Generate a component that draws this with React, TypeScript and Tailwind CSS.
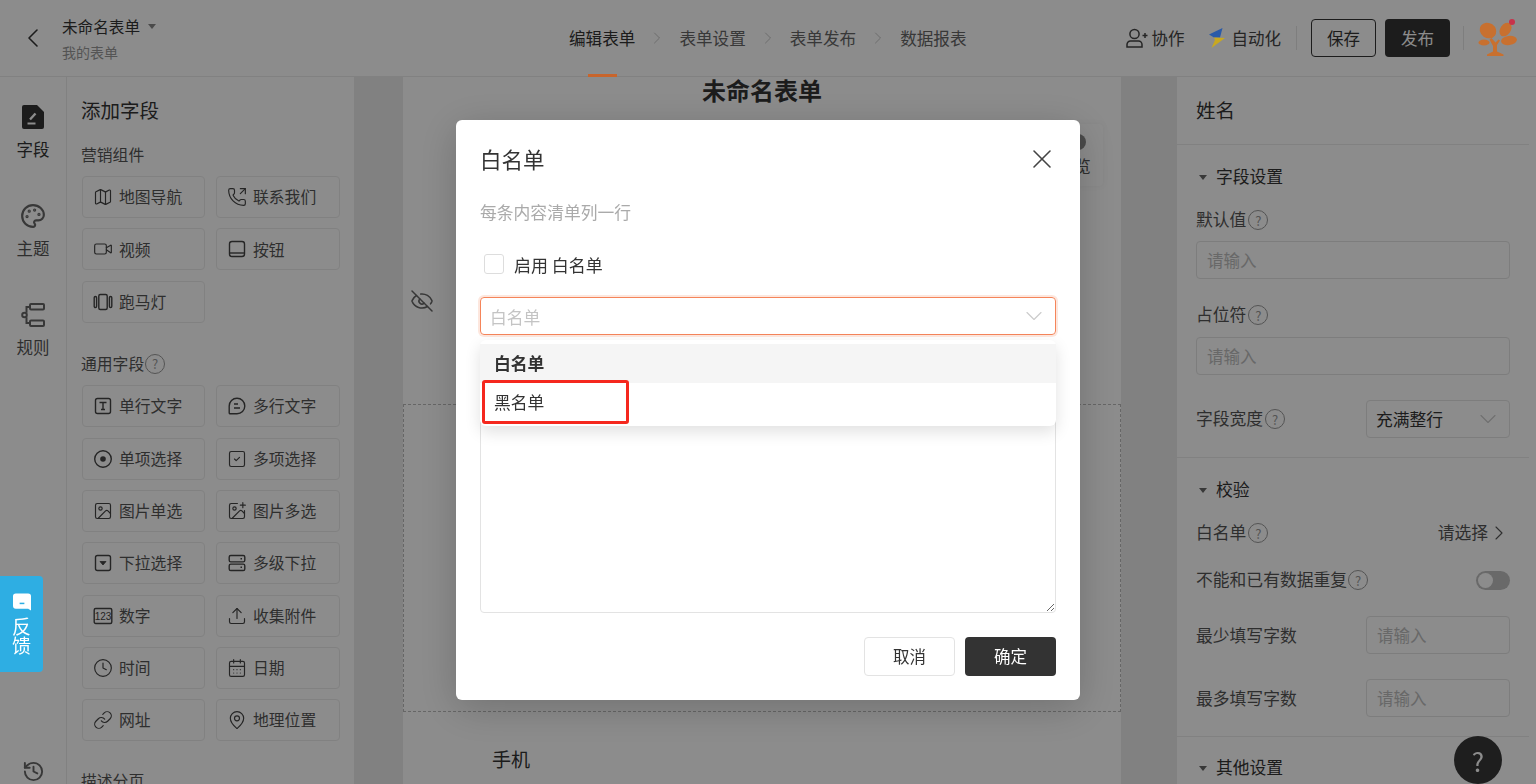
import type { ReactNode } from "react";
import {
  CalendarDays,
  ChevronDown,
  ChevronLeft,
  ChevronRight,
  Clock,
  EyeOff,
  History,
  Image,
  ImagePlus,
  Link,
  Map,
  MapPin,
  Palette,
  PhoneOutgoing,
  SquareCheck,
  Upload,
  Video,
  X,
} from "lucide-react";

const ico = { size: 20, strokeWidth: 1.4, color: "#444" };

function IconBoxT() {
  return (
    <svg width="20" height="20" viewBox="0 0 20 20" fill="none" stroke="#444" strokeWidth="1.4">
      <rect x="2.5" y="2.5" width="15" height="15" rx="2" />
      <path d="M6.5 6.5h7M10 6.5v7M8 13.5h4" />
    </svg>
  );
}

function IconChat() {
  return (
    <svg width="20" height="20" viewBox="0 0 20 20" fill="none" stroke="#444" strokeWidth="1.4">
      <path d="M10 2.2a7.8 7.8 0 1 1 0 15.6H3.2a1 1 0 0 1-1-1V10A7.8 7.8 0 0 1 10 2.2z" />
      <path d="M7 8h4M7 12h6" />
    </svg>
  );
}

function IconRadio() {
  return (
    <svg width="20" height="20" viewBox="0 0 20 20" fill="none" stroke="#444" strokeWidth="1.4">
      <circle cx="10" cy="10" r="8.3" />
      <circle cx="10" cy="10" r="2.8" fill="#444" stroke="none" />
    </svg>
  );
}

function IconButton() {
  return (
    <svg width="20" height="20" viewBox="0 0 20 20" fill="none" stroke="#444" strokeWidth="1.4">
      <rect x="2.5" y="2.5" width="15" height="15" rx="2.5" />
      <path d="M2.5 14h15" />
    </svg>
  );
}

function IconCarousel() {
  return (
    <svg width="20" height="20" viewBox="0 0 20 20" fill="none" stroke="#444" strokeWidth="1.4">
      <rect x="5.8" y="2.5" width="8.4" height="15" rx="1.5" />
      <rect x="1.2" y="4.5" width="2.4" height="11" rx="1.2" />
      <rect x="16.4" y="4.5" width="2.4" height="11" rx="1.2" />
    </svg>
  );
}

function IconDropdown() {
  return (
    <svg width="20" height="20" viewBox="0 0 20 20" fill="none" stroke="#444" strokeWidth="1.4">
      <rect x="2.5" y="2.5" width="15" height="15" rx="2" />
      <path d="M7 8.5h6L10 12z" fill="#444" strokeWidth="0.8" />
    </svg>
  );
}

function IconCascade() {
  return (
    <svg width="20" height="20" viewBox="0 0 20 20" fill="none" stroke="#444" strokeWidth="1.4">
      <rect x="2.2" y="2.5" width="15.6" height="6.4" rx="1.6" />
      <rect x="2.2" y="11.1" width="15.6" height="6.4" rx="1.6" />
      <path d="M13.5 5.7h1.5M13.5 14.3h1.5" />
    </svg>
  );
}

function IconNumber() {
  return (
    <svg width="20" height="20" viewBox="0 0 20 20" fill="none" stroke="#444" strokeWidth="1.4">
      <rect x="1.2" y="2.5" width="17.6" height="15" rx="1.5" />
      <text x="10" y="14" textAnchor="middle" fontSize="10" fill="#444" stroke="none" fontFamily="Liberation Sans">
        123
      </text>
    </svg>
  );
}

function Help({ className = "" }: { className?: string }) {
  return (
    <span
      className={`inline-flex h-[20px] w-[20px] shrink-0 items-center justify-center rounded-full border-[1.5px] border-[#999] text-[13px] leading-none text-[#999] ${className}`}
    >
      ?
    </span>
  );
}

const MARKETING: [ReactNode, string][] = [
  [<Map {...ico} />, "地图导航"],
  [<PhoneOutgoing {...ico} />, "联系我们"],
  [<Video {...ico} />, "视频"],
  [<IconButton />, "按钮"],
  [<IconCarousel />, "跑马灯"],
];

const COMMON: [ReactNode, string][] = [
  [<IconBoxT />, "单行文字"],
  [<IconChat />, "多行文字"],
  [<IconRadio />, "单项选择"],
  [<SquareCheck {...ico} />, "多项选择"],
  [<Image {...ico} />, "图片单选"],
  [<ImagePlus {...ico} />, "图片多选"],
  [<IconDropdown />, "下拉选择"],
  [<IconCascade />, "多级下拉"],
  [<IconNumber />, "数字"],
  [<Upload {...ico} />, "收集附件"],
  [<Clock {...ico} />, "时间"],
  [<CalendarDays {...ico} />, "日期"],
  [<Link {...ico} />, "网址"],
  [<MapPin {...ico} />, "地理位置"],
];

function FieldGrid({ items }: { items: [ReactNode, string][] }) {
  return (
    <div className="grid grid-cols-[123px_124px] gap-x-[11px] gap-y-[10.35px]">
      {items.map(([icon, label]) => (
        <div
          key={label}
          className="flex h-[42px] items-center gap-[6px] rounded-[4px] border border-[#ececec] pl-[10px] text-[15.8px] text-[#555]"
        >
          {icon}
          <span>{label}</span>
        </div>
      ))}
    </div>
  );
}

function SectionHead({ label }: { label: string }) {
  return (
    <div className="flex h-[24px] items-center text-[16.8px] text-[#333]">
      <span className="ml-[3px] mr-[9px] h-0 w-0 border-x-[4px] border-t-[5px] border-x-transparent border-t-[#666]" />
      {label}
    </div>
  );
}

function TextInput({ className = "" }: { className?: string }) {
  return (
    <input
      placeholder="请输入"
      className={`h-[38px] rounded-[4px] border border-[#e3e3e3] px-[10px] text-[16.5px] outline-none placeholder:text-[#bdbdbd] ${className}`}
    />
  );
}

function TreeLogo() {
  return (
    <svg width="40" height="38" viewBox="0 0 40 38" className="relative z-50">
      <g fill="#c8702f">
        <ellipse cx="11" cy="11.5" rx="8.5" ry="7.5" transform="rotate(35 11 11.5)" />
        <ellipse cx="28.5" cy="10.5" rx="7.5" ry="5.2" transform="rotate(-55 28.5 10.5)" />
        <ellipse cx="32" cy="21.5" rx="8" ry="4.6" transform="rotate(-8 32 21.5)" />
        <ellipse cx="7" cy="23.5" rx="5.5" ry="3" />
        <path d="M14.5 19l4 4.5 3-3 1.5 1-3 4.5v6.5l6.5 3v1.5H10v-1.5l6-3v-5.5l-3.5-6.5z" />
      </g>
      <circle cx="35" cy="3" r="3" fill="#c8324a" />
    </svg>
  );
}

function BoltLogo() {
  return (
    <svg width="16" height="20" viewBox="0 0 16 20" className="relative z-50">
      <path d="M0 6.5L13.5 0 11 9.5 5 9.5z" fill="#2a5aa8" />
      <path d="M5 9.5L16 10 2.5 20 6 12z" fill="#c8a820" />
    </svg>
  );
}

function Header() {
  return (
    <header className="flex h-[77px] shrink-0 items-center border-b border-[#ececec] bg-white">
      <ChevronLeft size={32} strokeWidth={1.2} color="#333" className="ml-[17px]" />
      <div className="ml-[13px] w-[150px]">
        <div className="flex h-[24px] items-center gap-[8px] text-[15.6px] leading-none text-[#333]">
          未命名表单
          <span className="h-0 w-0 border-x-[4px] border-t-[5px] border-x-transparent border-t-[#888]" />
        </div>
        <div className="mt-[3px] text-[14px] leading-[20px] text-[#999]">我的表单</div>
      </div>
      <nav className="ml-[357px] flex h-full items-center text-[16.6px] text-[#666]">
        <div className="relative flex h-full items-center text-[#333]">
          编辑表单
          <span className="absolute bottom-[-1px] left-[19px] z-50 h-[3px] w-[29px] bg-[#c8652c]" />
        </div>
        <ChevronRight size={20} strokeWidth={1} color="#bbb" className="mx-[12px]" />
        <span>表单设置</span>
        <ChevronRight size={20} strokeWidth={1} color="#bbb" className="mx-[12px]" />
        <span>表单发布</span>
        <ChevronRight size={20} strokeWidth={1} color="#bbb" className="mx-[12px]" />
        <span>数据报表</span>
      </nav>
      <div className="ml-auto flex items-center pr-[19px] text-[16.5px] text-[#444]">
        <svg width="22" height="20" viewBox="0 0 22 20" fill="none" stroke="#444" strokeWidth="1.5">
          <circle cx="8.5" cy="6" r="4.6" />
          <path d="M1 19v-2.5a3.5 3.5 0 0 1 3.5-3.5h8a3.5 3.5 0 0 1 3.5 3.5V19zM16.5 7.5h5M19 5v5" />
        </svg>
        <span className="ml-[4px]">协作</span>
        <span className="ml-[24px]">
          <BoltLogo />
        </span>
        <span className="ml-[7px]">自动化</span>
        <span className="ml-[15px] h-[24px] w-px bg-[#e5e5e5]" />
        <button className="ml-[14px] h-[38px] w-[65px] rounded-[4px] border border-[#333] text-[#333]">保存</button>
        <button className="ml-[9px] h-[38px] w-[65px] rounded-[4px] bg-[#333] text-white">发布</button>
        <span className="ml-[13px] mr-[13px] h-[24px] w-px bg-[#e5e5e5]" />
        <TreeLogo />
      </div>
    </header>
  );
}

function Rail() {
  return (
    <aside className="flex w-[67px] shrink-0 flex-col items-center border-r border-[#ececec] bg-white pt-[27px] text-[16.5px] text-[#555]">
      <div className="flex h-[99px] flex-col items-center text-[#333]">
        <svg width="24" height="26" viewBox="0 0 24 26">
          <path d="M3 1h13l7 7v15a2 2 0 0 1-2 2H3a2 2 0 0 1-2-2V3a2 2 0 0 1 2-2z" fill="#333" />
          <path d="M9 15.5l5.5-6" stroke="#fff" strokeWidth="2.4" fill="none" />
          <path d="M6.5 19.5h8" stroke="#fff" strokeWidth="2" fill="none" />
        </svg>
        <span className="mt-[7px] leading-[24px]">字段</span>
      </div>
      <div className="flex h-[99px] flex-col items-center">
        <Palette size={26} strokeWidth={2} color="#666" />
        <span className="mt-[7px] leading-[24px]">主题</span>
      </div>
      <div className="flex h-[99px] flex-col items-center">
        <svg width="24" height="26" viewBox="0 0 24 26" fill="none" stroke="#666" strokeWidth="2">
          <rect x="9" y="2" width="14" height="5.5" rx="1" />
          <rect x="9" y="18.5" width="14" height="5.5" rx="1" />
          <circle cx="3.5" cy="13" r="2.3" />
          <path d="M9 5H5.5v5.7M5.5 15.3V21H9" />
        </svg>
        <span className="mt-[7px] leading-[24px]">规则</span>
      </div>
      <History size={23} strokeWidth={2} color="#666" className="mt-auto mb-[1px]" />
    </aside>
  );
}

function FieldPanel() {
  return (
    <aside className="w-[287px] shrink-0 bg-white pl-[15px] pt-[19px]">
      <h2 className="-ml-px text-[19.5px] font-normal leading-[28px] text-[#333]">添加字段</h2>
      <div className="-ml-px mb-[9px] mt-[19px] text-[15.8px] leading-[24px] text-[#555]">营销组件</div>
      <FieldGrid items={MARKETING} />
      <div className="-ml-px mb-[9.5px] mt-[29px] flex items-center text-[15.8px] leading-[24px] text-[#555]">
        通用字段
        <Help className="ml-[1px]" />
      </div>
      <FieldGrid items={COMMON} />
      <div className="-ml-px mt-[28px] text-[15.8px] leading-[24px] text-[#555]">描述分页</div>
    </aside>
  );
}

function Canvas() {
  return (
    <main className="min-w-0 flex-1 bg-[#ececec] pl-[49px] pr-[56px]">
      <div className="relative h-full bg-white">
        <div className="text-center text-[24px] font-bold leading-[25px] text-[#333]">未命名表单</div>
        <EyeOff size={24} strokeWidth={1.5} color="#666" className="absolute left-[7px] top-[212px]" />
        <div className="absolute right-[18px] top-[47px] flex h-[62px] w-[58px] flex-col items-center rounded-[4px] bg-white pt-[10px] text-[16.8px] leading-[24px] text-[#555] shadow-[0_0_6px_rgba(0,0,0,0.05)]">
          <span className="h-[16px] w-[24px] rounded-full bg-[#888]" />
          <span className="mt-[4px]">预览</span>
        </div>
        <div className="mt-[302px] h-[308px] border border-dashed border-[#bbb]" />
        <div className="ml-[89px] mt-[33px] text-[19px] leading-[28px] text-[#333]">手机</div>
      </div>
    </main>
  );
}

function SettingsPanel() {
  return (
    <aside className="w-[359px] shrink-0 bg-white">
      <div className="w-[352px]">
        <div className="h-[68px] border-b border-[#ececec] pl-[19px] pt-[19px] text-[19.5px] leading-[28px] text-[#333]">
          姓名
        </div>
        <section className="h-[313px] border-b border-[#ececec] pl-[19px] pt-[20px] text-[16.8px] text-[#555]">
          <SectionHead label="字段设置" />
          <div className="mt-[19px] flex h-[24px] items-center">
            默认值
            <Help className="ml-[2px]" />
          </div>
          <TextInput className="mt-[9px] w-[314px]" />
          <div className="mt-[24px] flex h-[24px] items-center">
            占位符
            <Help className="ml-[2px]" />
          </div>
          <TextInput className="mt-[10px] w-[314px]" />
          <div className="mt-[25px] flex w-[314px] items-center justify-between">
            <span className="flex items-center">
              字段宽度
              <Help className="ml-[2px]" />
            </span>
            <div className="flex h-[38px] w-[144px] items-center justify-between rounded-[4px] border border-[#e3e3e3] pl-[9px] pr-[7px] text-[#333]">
              <span className="pt-[2px]">充满整行</span>
              <ChevronDown size={28} strokeWidth={1} color="#ccc" />
            </div>
          </div>
        </section>
        <section className="h-[279px] border-b border-[#ececec] pl-[19px] pt-[20px] text-[16.8px] text-[#555]">
          <SectionHead label="校验" />
          <div className="mt-[19px] flex h-[24px] w-[314px] items-center justify-between">
            <span className="flex items-center">
              白名单
              <Help className="ml-[2px]" />
            </span>
            <span className="flex items-center">
              请选择
              <ChevronRight size={24} strokeWidth={1.1} color="#555" className="-mx-px" />
            </span>
          </div>
          <div className="mt-[23px] flex h-[24px] w-[314px] items-center justify-between">
            <span className="flex items-center">
              不能和已有数据重复
              <Help className="ml-[1px]" />
            </span>
            <span className="flex h-[19px] w-[34px] items-center rounded-full bg-[#bfbfbf] pl-[2px]">
              <span className="h-[15px] w-[15px] rounded-full bg-white" />
            </span>
          </div>
          <div className="mt-[24px] flex w-[314px] items-center justify-between">
            <span className="pt-[2px]">最少填写字数</span>
            <TextInput className="w-[144px]" />
          </div>
          <div className="mt-[25px] flex w-[314px] items-center justify-between">
            <span className="pt-[2px]">最多填写字数</span>
            <TextInput className="w-[144px]" />
          </div>
        </section>
        <section className="pl-[19px] pt-[19px]">
          <SectionHead label="其他设置" />
        </section>
      </div>
    </aside>
  );
}

function Dialog() {
  return (
    <div className="fixed inset-0 z-40 flex justify-center bg-black/45 pt-[120px]">
      <div className="relative h-[580px] w-[624px] rounded-[6px] bg-white px-[24px] pt-[25px] text-[#333] shadow-[0_8px_40px_rgba(0,0,0,0.2)]">
        <div className="text-[21.5px] leading-[28px]">白名单</div>
        <X size={32} strokeWidth={1.2} color="#444" className="absolute right-[22px] top-[23px]" />
        <div className="mt-[27px] text-[16.8px] leading-[24px] text-[#aaa]">每条内容清单列一行</div>
        <label className="mt-[29px] flex h-[24px] items-center text-[17px]">
          <span className="-mt-[2px] ml-[4px] mr-[10px] h-[20px] w-[20px] rounded-[3px] border border-[#ddd]" />
          启用 白名单
        </label>
        <div className="mt-[20px] flex h-[38px] items-center justify-between rounded-[4px] border border-[#f5855a] pl-[9px] pr-[7px] text-[16.8px] text-[#c4c4c4] shadow-[0_0_0_2px_rgba(245,133,90,0.2)]">
          <span className="pt-[3px]">白名单</span>
          <ChevronDown size={28} strokeWidth={1} color="#ccc" />
        </div>
        <textarea className="mt-[15px] block h-[263px] w-full resize-y rounded-[4px] border border-[#e3e3e3] outline-none" />
        <div className="mt-[24px] flex justify-end gap-[10px] text-[16.5px]">
          <button className="h-[39px] w-[91px] rounded-[4px] border border-[#e3e3e3] bg-white text-[#333]">取消</button>
          <button className="h-[39px] w-[91px] rounded-[4px] bg-[#333] text-white">确定</button>
        </div>

        <div className="absolute left-[24px] right-[24px] top-[220px] h-[86px] rounded-[6px] bg-white py-[4px] text-[16.8px] shadow-[0_6px_16px_rgba(0,0,0,0.12)]">
          <div className="flex h-[39px] items-center bg-[#f5f5f5] pl-[14px] font-bold">白名单</div>
          <div className="flex h-[39px] items-center pl-[14px]">黑名单</div>
        </div>
        <div className="absolute left-[26px] top-[260px] h-[44px] w-[147px] rounded-[3px] border-[3px] border-[#f5281e]" />
      </div>
    </div>
  );
}

export default function App() {
  return (
    <div className="flex h-[784px] w-[1536px] flex-col overflow-hidden bg-white font-['Noto_Sans_CJK_SC','Microsoft_YaHei',sans-serif]">
      <Header />
      <div className="flex min-h-0 flex-1">
        <Rail />
        <FieldPanel />
        <Canvas />
        <SettingsPanel />
      </div>
      <div className="fixed bottom-0 right-[34px] flex h-[48px] w-[48px] items-center justify-center rounded-full bg-[#383838] text-[26px] text-white">
        ?
      </div>
      <Dialog />
      <div className="fixed left-0 top-[576px] z-50 flex h-[96px] w-[43px] flex-col items-center rounded-r-[4px] bg-[#2eaee3] pt-[17px] text-white">
        <svg width="18" height="18" viewBox="0 0 19 18">
          <path d="M3 0h13a3 3 0 0 1 3 3v15l-3-2H3a3 3 0 0 1-3-3V3a3 3 0 0 1 3-3z" fill="#fff" />
          <path d="M7 10.5h5" stroke="#2eaee3" strokeWidth="1.6" />
        </svg>
        <span className="mt-[5px] w-[19px] text-center text-[19px] leading-[19px]">反馈</span>
      </div>
    </div>
  );
}
